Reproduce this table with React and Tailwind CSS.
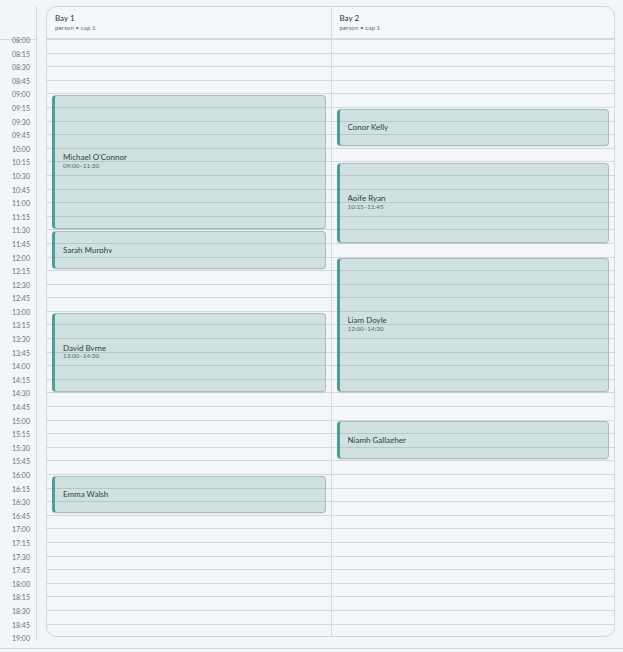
import React from "react";

const SLOT = 13.6;
const START = 8 * 60;
const SLOTS = 44;

const times = Array.from({ length: SLOTS + 1 }, (_, i) => {
  const m = START + i * 15;
  const h = String(Math.floor(m / 60)).padStart(2, "0");
  const mm = String(m % 60).padStart(2, "0");
  return `${h}:${mm}`;
});

const toSlot = (t) => {
  const [h, m] = t.split(":").map(Number);
  return (h * 60 + m - START) / 15;
};

const bays = [
  {
    name: "Bay 1",
    events: [
      { name: "Michael O'Connor", start: "09:00", end: "11:30", showTime: true },
      { name: "Sarah Murphy", start: "11:30", end: "12:15" },
      { name: "David Byrne", start: "13:00", end: "14:30", showTime: true },
      { name: "Emma Walsh", start: "16:00", end: "16:45" },
    ],
  },
  {
    name: "Bay 2",
    events: [
      { name: "Conor Kelly", start: "09:15", end: "10:00" },
      { name: "Aoife Ryan", start: "10:15", end: "11:45", showTime: true },
      { name: "Liam Doyle", start: "12:00", end: "14:30", showTime: true },
      { name: "Niamh Gallagher", start: "15:00", end: "15:45" },
    ],
  },
];

function Event({ ev }) {
  const s = toSlot(ev.start);
  const e = toSlot(ev.end);
  const slots = e - s;
  const top = s * SLOT + 0.6;
  const height = slots > 3 ? slots * SLOT - 2 : 37.5;
  return (
    <div
      className="absolute left-[5px] right-[5px] flex items-center rounded-[4px] border border-[#a9bcba] border-l-[3px] border-l-[#4f9d94] bg-[rgba(60,140,122,0.2)] pl-[8px] shadow-[0_1px_1px_rgba(0,0,0,0.08)]"
      style={{ top, height }}
    >
      <div className="min-w-0">
        <div className="overflow-hidden whitespace-nowrap text-[8px] leading-[6.5px] h-[6.5px] text-[#333c3c]">{ev.name}</div>
        {ev.showTime && (
          <div className="truncate text-[6.3px] leading-[8px] mt-[1px] text-[#5d6868]">
            {ev.start}–{ev.end}
          </div>
        )}
      </div>
    </div>
  );
}

export default function App() {
  return (
    <div
      className="w-[623px] h-[652px] bg-[#f3f6f9] overflow-hidden"
      style={{ fontFamily: "Lato, 'Open Sans', sans-serif" }}
    >
      <div className="flex h-[649px] border-b border-[#d3d8dd] pt-[6px]">
        <div className="w-[37px] shrink-0 border-r border-[#d3d8dd] h-[634px]">
          <div className="h-[34px] border-b border-[#d3d8dd]" />
          {times.map((t) => (
            <div key={t} className="h-[13.6px] last:h-0 relative">
              <div className="absolute right-[6px] top-0 -translate-y-1/2 text-[7px] leading-[8px] text-[#6a7079]">
                {t}
              </div>
            </div>
          ))}
        </div>
        <div className="ml-[9px] w-[569px] h-[631px] shrink-0 overflow-hidden rounded-[10px] border border-[#d0d6db] bg-[#f4f7fa]">
          <div className="grid grid-cols-2 h-full">
            {bays.map((bay, bi) => (
              <div key={bay.name} className={bi ? "border-l border-[#d3d8dd]" : ""}>
                <div className="h-[33px] border-b-2 border-[#d3d8dd] pl-[8px] pt-[6px]">
                  <div className="text-[8px] leading-[10px] text-[#2b2f33]">{bay.name}</div>
                  <div className="text-[6.3px] leading-[9px] text-[#6b727a]">person • cap 1</div>
                </div>
                <div className="relative">
                  {Array.from({ length: SLOTS }, (_, i) => (
                    <div key={i} className="h-[13.6px] border-b border-[#d3d8dd]" />
                  ))}
                  {bay.events.map((ev) => (
                    <Event key={ev.name} ev={ev} />
                  ))}
                </div>
              </div>
            ))}
          </div>
        </div>
      </div>
    </div>
  );
}
